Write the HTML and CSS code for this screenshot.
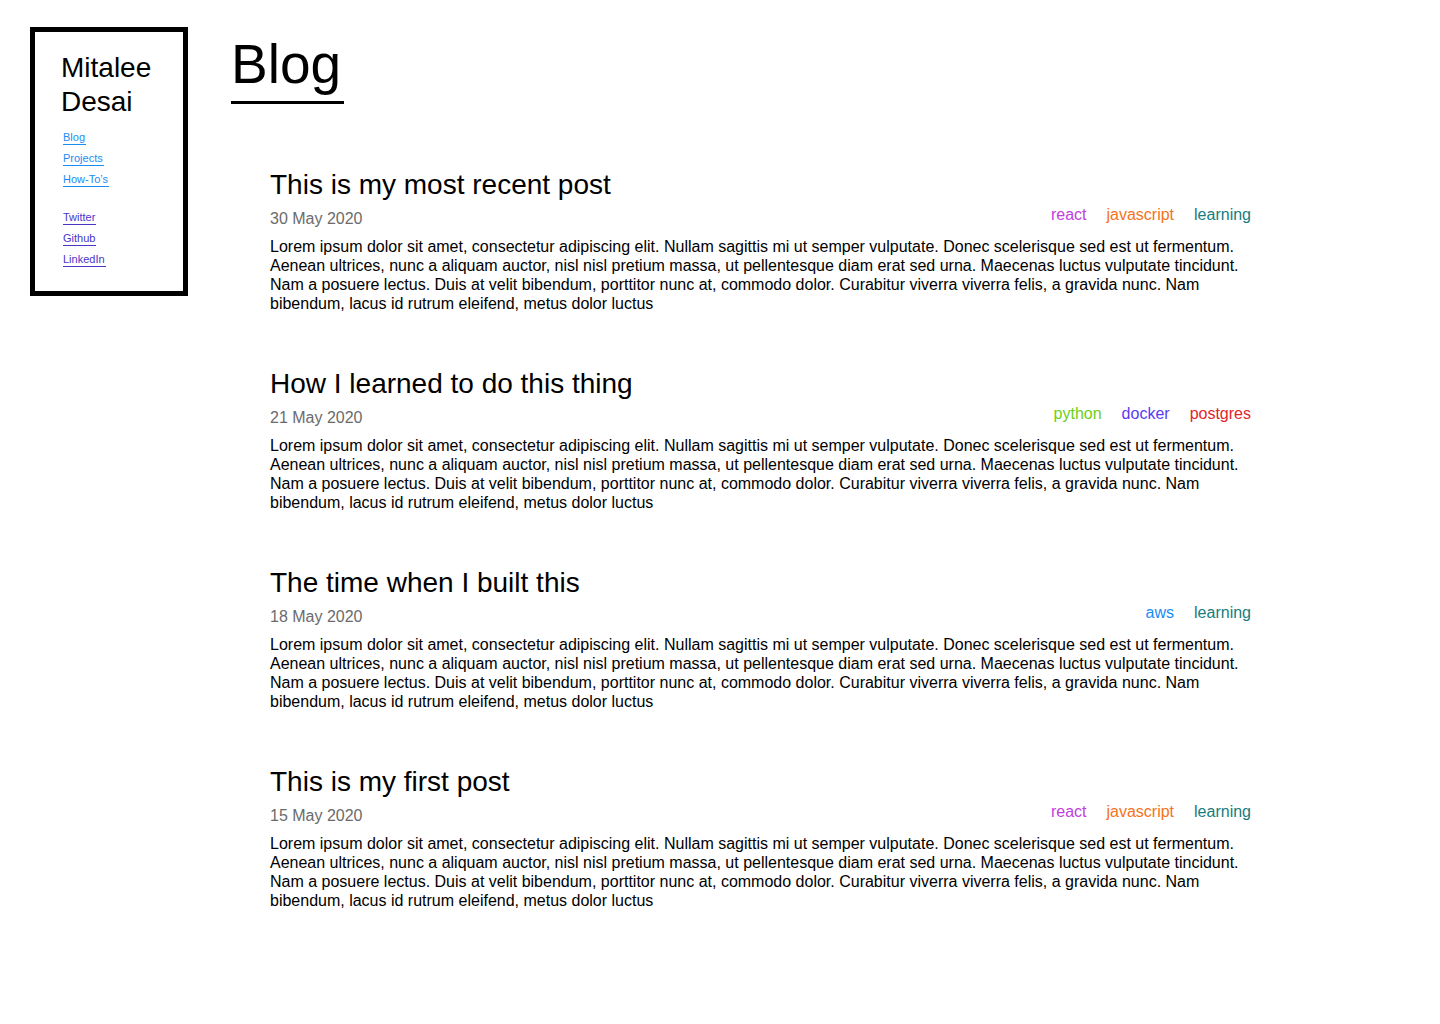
FILE: index.html
```html
<!DOCTYPE html>
<html lang="en">
<head>
<meta charset="utf-8">
<title>Blog | Mitalee Desai</title>
<link rel="stylesheet" href="styles.css">
</head>
<body>
<div class="layout">
  <aside class="sidebar">
    <h2 class="name">Mitalee Desai</h2>
    <ul class="nav nav-pages">
      <li><a href="#">Blog</a></li>
      <li><a href="#">Projects</a></li>
      <li><a href="#">How-To’s</a></li>
    </ul>
    <ul class="nav nav-social">
      <li><a href="#">Twitter</a></li>
      <li><a href="#">Github</a></li>
      <li><a href="#">LinkedIn</a></li>
    </ul>
  </aside>
  <main class="main">
    <h1 class="page-title">Blog</h1>
    <section class="posts">
      <article class="post">
        <h2 class="post-title">This is my most recent post</h2>
        <div class="meta">
          <span class="date">30 May 2020</span>
          <span class="tags"><span class="tag t-react">react</span><span class="tag t-js">javascript</span><span class="tag t-learning">learning</span></span>
        </div>
        <p class="excerpt">Lorem ipsum dolor sit amet, consectetur adipiscing elit. Nullam sagittis mi ut semper vulputate. Donec scelerisque sed est ut fermentum. Aenean ultrices, nunc a aliquam auctor, nisl nisl pretium massa, ut pellentesque diam erat sed urna. Maecenas luctus vulputate tincidunt. Nam a posuere lectus. Duis at velit bibendum, porttitor nunc at, commodo dolor. Curabitur viverra viverra felis, a gravida nunc. Nam bibendum, lacus id rutrum eleifend, metus dolor luctus</p>
      </article>
      <article class="post">
        <h2 class="post-title">How I learned to do this thing</h2>
        <div class="meta">
          <span class="date">21 May 2020</span>
          <span class="tags"><span class="tag t-python">python</span><span class="tag t-docker">docker</span><span class="tag t-postgres">postgres</span></span>
        </div>
        <p class="excerpt">Lorem ipsum dolor sit amet, consectetur adipiscing elit. Nullam sagittis mi ut semper vulputate. Donec scelerisque sed est ut fermentum. Aenean ultrices, nunc a aliquam auctor, nisl nisl pretium massa, ut pellentesque diam erat sed urna. Maecenas luctus vulputate tincidunt. Nam a posuere lectus. Duis at velit bibendum, porttitor nunc at, commodo dolor. Curabitur viverra viverra felis, a gravida nunc. Nam bibendum, lacus id rutrum eleifend, metus dolor luctus</p>
      </article>
      <article class="post">
        <h2 class="post-title">The time when I built this</h2>
        <div class="meta">
          <span class="date">18 May 2020</span>
          <span class="tags"><span class="tag t-aws">aws</span><span class="tag t-learning">learning</span></span>
        </div>
        <p class="excerpt">Lorem ipsum dolor sit amet, consectetur adipiscing elit. Nullam sagittis mi ut semper vulputate. Donec scelerisque sed est ut fermentum. Aenean ultrices, nunc a aliquam auctor, nisl nisl pretium massa, ut pellentesque diam erat sed urna. Maecenas luctus vulputate tincidunt. Nam a posuere lectus. Duis at velit bibendum, porttitor nunc at, commodo dolor. Curabitur viverra viverra felis, a gravida nunc. Nam bibendum, lacus id rutrum eleifend, metus dolor luctus</p>
      </article>
      <article class="post">
        <h2 class="post-title">This is my first post</h2>
        <div class="meta">
          <span class="date">15 May 2020</span>
          <span class="tags"><span class="tag t-react">react</span><span class="tag t-js">javascript</span><span class="tag t-learning">learning</span></span>
        </div>
        <p class="excerpt">Lorem ipsum dolor sit amet, consectetur adipiscing elit. Nullam sagittis mi ut semper vulputate. Donec scelerisque sed est ut fermentum. Aenean ultrices, nunc a aliquam auctor, nisl nisl pretium massa, ut pellentesque diam erat sed urna. Maecenas luctus vulputate tincidunt. Nam a posuere lectus. Duis at velit bibendum, porttitor nunc at, commodo dolor. Curabitur viverra viverra felis, a gravida nunc. Nam bibendum, lacus id rutrum eleifend, metus dolor luctus</p>
      </article>
    </section>
  </main>
</div>
</body>
</html>
```

FILE: styles.css
```css
* { box-sizing: border-box; }

html, body {
  margin: 0;
  padding: 0;
  background: #fff;
  color: #000;
  font-family: "Liberation Sans", Arial, Helvetica, sans-serif;
}

.layout {
  display: flex;
  align-items: flex-start;
  padding: 27px 0 0 30px;
}

.sidebar {
  flex: 0 0 158px;
  width: 158px;
  border: 5px solid #000;
  padding: 19px 20px 21px 26px;
}

.name {
  margin: 0;
  font-size: 28px;
  line-height: 34px;
  font-weight: 400;
}

.nav {
  list-style: none;
  margin: 8px 0 0;
  padding: 0 0 0 2px;
  font-size: 11px;
  line-height: 21px;
}

.nav-social {
  margin-top: 17px;
}

.nav a {
  text-decoration: none;
  padding: 0 1px 1px 0;
  border-bottom: 1px solid currentColor;
}

.nav-pages a { color: #1a8cf5; }
.nav-social a { color: #4a35c8; }

.main {
  margin-left: 43px;
  padding-top: 7px;
  flex: 1;
}

.page-title {
  display: inline-block;
  margin: 0;
  font-size: 55px;
  line-height: 61px;
  font-weight: 400;
  padding: 0 3px 6px 0;
  border-bottom: 3px solid #000;
}

.posts {
  margin: 65px 0 0 39px;
  width: 981px;
}

.post {
  margin-bottom: 55px;
}

.post-title {
  margin: 0;
  font-size: 28px;
  line-height: 32px;
  font-weight: 400;
}

.meta {
  display: flex;
  justify-content: space-between;
  align-items: flex-start;
  margin-top: 8px;
  font-size: 16px;
  line-height: 19px;
}

.date {
  color: #6b6b6b;
}

.tags {
  display: flex;
  gap: 20px;
  margin-top: -4px;
}

.t-react { color: #c13fdc; }
.t-js { color: #f47320; }
.t-learning { color: #187c7c; }
.t-python { color: #6ccf17; }
.t-docker { color: #5a3bf2; }
.t-postgres { color: #e2252b; }
.t-aws { color: #1a8cf5; }

.excerpt {
  margin: 9px 0 0;
  font-size: 16px;
  line-height: 19px;
}
```
